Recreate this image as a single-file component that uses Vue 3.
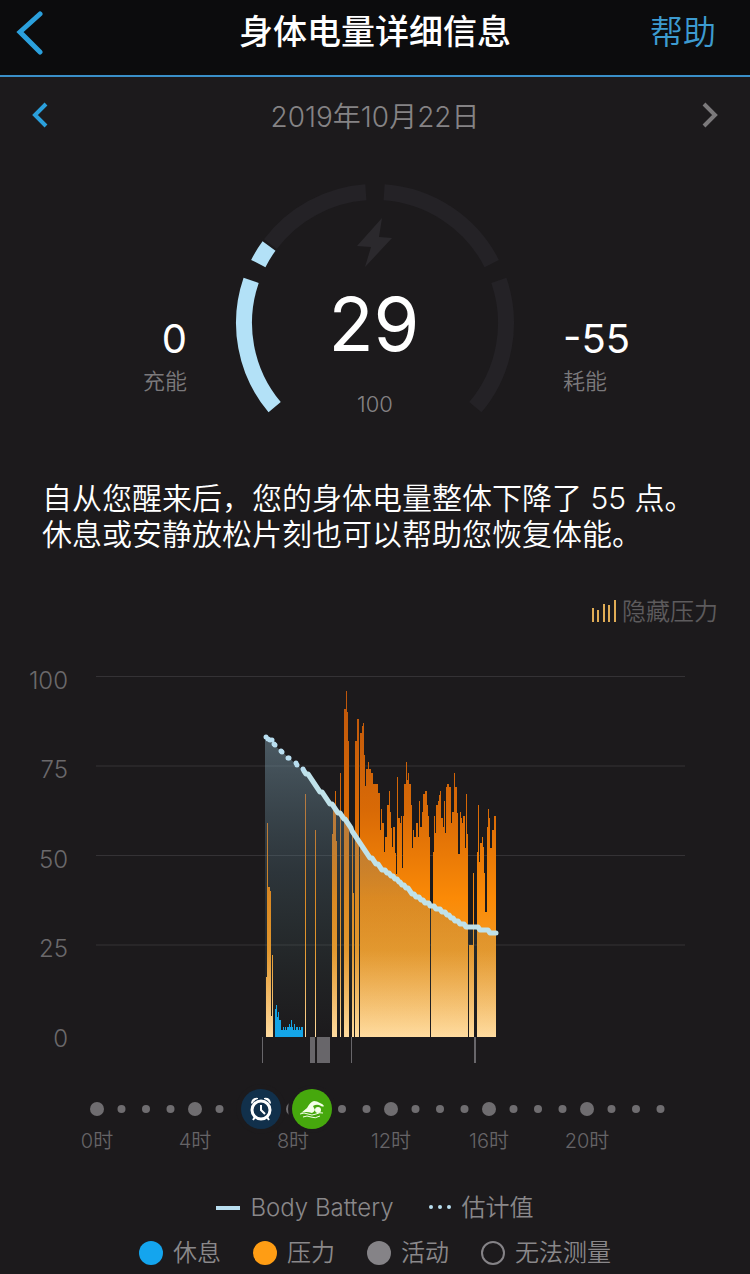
<template>
  <main class="page">
    <header class="topbar">
      <button type="button" class="icon-btn" aria-label="返回">
        <svg width="28" height="46" viewBox="0 0 28 46">
          <path d="M24 5 L4 23 L24 43" class="chev back" />
        </svg>
      </button>
      <h1>身体电量详细信息</h1>
      <a href="#" class="help">帮助</a>
    </header>

    <nav class="datebar">
      <button type="button" class="icon-btn" aria-label="前一天">
        <svg width="16" height="28" viewBox="0 0 16 28">
          <path d="M14 3 L3 14 L14 25" class="chev" />
        </svg>
      </button>
      <time datetime="2019-10-22">2019年10月22日</time>
      <button type="button" class="icon-btn" aria-label="后一天">
        <svg width="16" height="28" viewBox="0 0 16 28">
          <path d="M2 3 L13 14 L2 25" class="chev next" />
        </svg>
      </button>
    </nav>

    <section class="summary">
      <div class="stat left">
        <strong>0</strong>
        <span>充能</span>
      </div>
      <svg class="gauge" viewBox="0 0 280 250">
        <path v-for="seg in gauge" :key="seg.from" :d="arc(seg.from, seg.to)" :class="['seg', { on: seg.on }]" />
        <path d="M147 43 L122 71 L136 72 L130 92 L157 63 L144 62 Z" class="bolt" />
        <text x="139" y="176" class="score">29</text>
        <text x="140" y="237" class="max">100</text>
      </svg>
      <div class="stat right">
        <strong>-55</strong>
        <span>耗能</span>
      </div>
    </section>

    <p class="message">自从您醒来后，您的身体电量整体下降了 55 点。<br />休息或安静放松片刻也可以帮助您恢复体能。</p>

    <div class="tools">
      <button type="button" class="toggle">
        <svg width="24" height="24" viewBox="0 0 24 24">
          <path d="M0 8h2v14h-2z M5 10h2v12h-2z M11 4h2v18h-2z M16 5h2v17h-2z M22 0h2v22h-2z" fill="#e0ac55" />
        </svg>
        <span>隐藏压力</span>
      </button>
    </div>

    <svg class="chart" viewBox="0 0 750 500">
      <defs>
        <linearGradient id="stress" gradientUnits="userSpaceOnUse" x1="0" y1="30" x2="0" y2="377">
          <stop offset="0" stop-color="#bd560c" />
          <stop offset="0.35" stop-color="#d96a06" />
          <stop offset="0.6" stop-color="#fb8a06" />
          <stop offset="0.75" stop-color="#f59a22" />
          <stop offset="1" stop-color="#ffdca0" />
        </linearGradient>
        <linearGradient id="battery" gradientUnits="userSpaceOnUse" x1="0" y1="78" x2="0" y2="377">
          <stop offset="0" stop-color="#86a9bb" stop-opacity="0.45" />
          <stop offset="0.45" stop-color="#5f8594" stop-opacity="0.25" />
          <stop offset="0.8" stop-color="#5c8b8a" stop-opacity="0.08" />
          <stop offset="1" stop-color="#5c8b8a" stop-opacity="0" />
        </linearGradient>
      </defs>

      <g v-for="v in levels" :key="v">
        <line v-if="v" x1="96" x2="685" :y1="yOf(v)" :y2="yOf(v)" class="grid" />
        <text x="68" :y="yOf(v) + 12" class="level">{{ v }}</text>
      </g>

      <path :d="steps(stress)" fill="url(#stress)" />
      <path :d="steps(rest)" fill="#14a5e8" />
      <path :d="areaPath" fill="url(#battery)" />
      <rect v-for="a in activity" :key="a[0]" :x="a[0]" y="377" :width="a[1]" height="26" class="activity" />
      <path :d="curvePath" class="curve" />
      <circle v-for="d in estimated" :key="d[0]" :cx="d[0]" :cy="d[1]" r="2.5" class="estimate" />

      <g v-for="h in hours" :key="'h' + h">
        <circle :cx="xOf(h)" cy="449" :r="h % 4 ? 4 : 7" class="dot" />
        <text v-if="h % 4 === 0" :x="xOf(h)" y="488" class="hour">{{ h }}时</text>
      </g>

      <g transform="translate(261 449)">
        <circle r="25" class="ring" />
        <circle r="20" fill="#11304b" />
        <circle cy="1" r="9" class="clock" />
        <path d="M0 -4 V1 L4 5" class="hands" />
        <path d="M-10 -6 Q-9 -12 -3 -11 L-3 -10 Q-7 -9 -9 -5 Z M10 -6 Q9 -12 3 -11 L3 -10 Q7 -9 9 -5 Z" class="bell" />
        <path d="M-6 8 L-8 11 M6 8 L8 11" class="hands" />
      </g>
      <g transform="translate(312 449)">
        <circle r="24" class="ring" />
        <circle r="20" fill="#46a80d" />
        <path
          d="M-11 4 L-5 -1 Q-2 -7 2 -8 Q5 -8 8 -6 Q11 -5 12 -3 Q11 -2 9 -3 Q6 -5 3 -4 L1 -3 Q2 -1 3 1 Q2 3 0 4 Q-6 2 -11 4 Z"
          fill="#f4ffe9"
        />
        <circle cx="6" cy="1" r="3" fill="#f4ffe9" />
        <path d="M-12 5 Q-8 3 -4 5 T4 5 T11 4 M-9 8 Q-5 6 -1 8 T8 7" class="wave" />
      </g>
    </svg>

    <footer class="legend">
      <ul class="lines">
        <li>
          <i class="dash"></i>
          Body Battery
        </li>
        <li>
          <svg width="24" height="8" viewBox="0 0 24 8">
            <circle cx="3" cy="3" r="2" />
            <circle cx="12" cy="3" r="2" />
            <circle cx="21" cy="3" r="2" />
          </svg>
          估计值
        </li>
      </ul>
      <ul class="kinds">
        <li v-for="k in kinds" :key="k.name">
          <i :class="['mark', k.type]"></i>
          {{ k.name }}
        </li>
      </ul>
    </footer>
  </main>
</template>

<script setup>
import { computed } from 'vue'

const BASE = 377
const levels = [100, 75, 50, 25, 0]
const hours = Array.from({ length: 24 }, (_, i) => i)

const kinds = [
  { name: '休息', type: 'rest' },
  { name: '压力', type: 'stress' },
  { name: '活动', type: 'active' },
  { name: '无法测量', type: 'none' },
]

// degrees, 0 = right, counter-clockwise
const gauge = [
  { from: 220, to: 161, on: true },
  { from: 153, to: 144, on: true },
  { from: 143, to: 94, on: false },
  { from: 86, to: 27, on: false },
  { from: 19, to: -40, on: false },
]

// [x, top]: every run lasts until the next one starts
const stress = [
  [266, 317], [267, 163], [268, 227], [270, 231], [271, 356], [272, 295], [273, 377],
  [305, 134], [306, 377], [315, 170], [316, 377],
  [332, 174], [333, 144], [335, 131], [336, 181], [337, 377], [340, 113], [341, 377],
  [344, 49], [346, 31], [347, 52], [348, 81], [349, 377], [352, 173], [353, 233], [354, 377],
  [355, 81], [357, 59], [359, 377], [360, 73], [362, 66], [363, 63], [364, 95], [365, 126],
  [366, 109], [368, 102], [369, 109], [371, 113], [373, 124], [375, 124], [378, 133],
  [380, 170], [381, 149], [382, 163], [384, 192], [385, 177], [387, 145], [389, 131],
  [390, 152], [391, 168], [392, 187], [393, 167], [395, 193], [396, 214], [397, 117],
  [398, 158], [400, 163], [401, 156], [402, 208], [403, 156], [404, 124], [406, 102],
  [407, 120], [408, 113], [409, 124], [411, 145], [412, 188], [413, 170], [414, 177],
  [416, 163], [418, 177], [419, 141], [420, 167], [422, 152], [423, 134], [425, 131],
  [427, 145], [428, 156], [429, 177], [430, 377], [431, 245], [433, 192], [434, 156],
  [435, 173], [436, 145], [438, 141], [439, 135], [440, 131], [441, 158], [443, 167],
  [444, 141], [445, 173], [446, 127], [447, 124], [449, 127], [451, 163], [452, 152],
  [454, 113], [455, 127], [457, 153], [458, 194], [460, 152], [461, 158], [462, 163],
  [463, 156], [465, 188], [466, 134], [467, 174], [468, 377], [469, 285], [472, 285],
  [473, 213], [474, 377], [477, 192], [478, 145], [479, 202], [480, 183], [482, 177],
  [483, 187], [484, 213], [485, 252], [487, 167], [488, 149], [489, 158], [490, 188],
  [492, 170], [494, 156], [496, 377],
]

const rest = [
  [275, 349], [276, 345], [277, 357], [278, 352], [279, 360], [281, 370], [283, 367],
  [284, 370], [285, 367], [286, 370], [287, 367], [289, 364], [290, 367], [291, 360],
  [292, 367], [293, 370], [294, 364], [295, 370], [296, 367], [298, 370], [299, 367],
  [300, 370], [301, 367], [303, 377],
]

const battery = [
  [304, 110], [310, 118], [320, 131], [332, 145], [345, 160], [352, 170], [360, 183],
  [370, 197], [383, 210], [400, 222], [417, 237], [430, 245], [445, 253], [458, 262],
  [467, 267], [478, 267], [482, 270], [496, 273],
]

const estimated = [
  [266, 77], [268, 79], [270, 80], [272, 80], [274, 84], [275, 85], [281, 91],
  [282, 92], [288, 98], [289, 98], [296, 103], [297, 105], [303, 109],
]

// [x, width]
const activity = [[262, 1], [310, 5], [317, 13], [351, 1], [474, 2]]

const yOf = (v) => 16.5 + (100 - v) * 3.58
const xOf = (h) => 97 + h * 24.5

function arc(from, to) {
  const r = 131
  const at = (deg) => {
    const a = (deg * Math.PI) / 180
    return `${(140 + r * Math.cos(a)).toFixed(2)} ${(148 - r * Math.sin(a)).toFixed(2)}`
  }
  return `M${at(from)} A${r} ${r} 0 0 1 ${at(to)}`
}

function steps(runs) {
  const body = runs.map(([x, y]) => `H${x} V${y}`).join(' ')
  return `M${runs[0][0]} ${BASE} ${body} Z`
}

const curve = computed(() => {
  const out = []
  for (let i = 1; i < battery.length; i++) {
    const [x0, y0] = battery[i - 1]
    const [x1, y1] = battery[i]
    for (let x = x0; x < x1; x += 2) {
      const y = y0 + ((y1 - y0) * (x - x0)) / (x1 - x0)
      out.push([x, Math.round(y / 3) * 3])
    }
  }
  out.push(battery[battery.length - 1])
  return out
})

const curvePath = computed(() => 'M' + curve.value.map((p) => p.join(' ')).join(' L'))
const areaPath = computed(
  () => `M265 ${BASE} V77 ` + curve.value.map((p) => `L${p.join(' ')}`).join(' ') + ` V${BASE} Z`
)
</script>

<style>
body {
  margin: 0;
  background: #1c1a1c;
}
</style>

<style scoped>
.page {
  background: #1c1a1c;
  color: #fff;
  font-family: Inter, 'Noto Sans CJK SC', sans-serif;
  font-weight: 350;
  padding-bottom: 2px;
}

.topbar {
  display: grid;
  grid-template-columns: 100px 1fr 100px;
  align-items: center;
  padding: 9px 34px 20px 16px;
  background: #0c0c0d;
  border-bottom: 2px solid #3a8fc8;
}

h1 {
  margin: 0;
  padding-left: 18px;
  font-size: 34px;
  line-height: 40px;
  font-weight: 500;
  text-align: center;
}

.help {
  color: #3d9bd0;
  font-size: 33px;
  line-height: 40px;
  text-align: right;
  text-decoration: none;
}

.icon-btn {
  display: flex;
  padding: 0;
  border: none;
  background: none;
  cursor: pointer;
}

.chev {
  fill: none;
  stroke: #2ba0dc;
  stroke-width: 4;
}

.back {
  stroke-width: 5;
  stroke-linecap: round;
}

.next {
  stroke: #7b797b;
}

.datebar {
  display: flex;
  align-items: center;
  justify-content: space-between;
  height: 76px;
  padding: 0 32px;
}

.datebar time {
  color: #858385;
  font-size: 28px;
}

.summary {
  display: grid;
  grid-template-columns: 1fr 280px 1fr;
  padding-top: 22px;
}

.gauge {
  display: block;
  width: 100%;
}

.seg {
  fill: none;
  stroke: #242226;
  stroke-width: 16;
}

.seg.on {
  stroke: #b3e1f7;
}

.bolt {
  fill: #2b292d;
}

.score,
.max,
.hour {
  text-anchor: middle;
}

.score {
  fill: #fff;
  font-size: 74px;
  font-weight: 400;
}

.max {
  fill: #858385;
  font-size: 22px;
}

.stat {
  display: flex;
  flex-direction: column;
  padding-top: 140px;
}

.stat.left {
  align-items: flex-end;
  padding-right: 48px;
}

.stat.right {
  padding-left: 48px;
}

.stat strong {
  font-size: 40px;
  line-height: 48px;
  font-weight: 400;
}

.stat span {
  color: #7b797b;
  font-size: 22px;
  line-height: 36px;
}

.message {
  margin: 0;
  padding: 55px 30px 0 42px;
  font-size: 30px;
  line-height: 36px;
}

.tools {
  display: flex;
  justify-content: flex-end;
  padding: 42px 32px 0 0;
}

.toggle {
  display: flex;
  align-items: center;
  gap: 6px;
  padding: 0;
  border: none;
  background: none;
  color: #5d5b5d;
  font: inherit;
  font-size: 24px;
  line-height: 36px;
  cursor: pointer;
}

.chart {
  display: block;
  width: 100%;
  margin-top: 30px;
}

.grid {
  stroke: #343235;
}

.level {
  fill: #6b696b;
  font-size: 24px;
  text-anchor: end;
}

.activity {
  fill: #68666a;
}

.curve {
  fill: none;
  stroke: #c0e2ea;
  stroke-width: 5;
  stroke-linejoin: round;
  stroke-linecap: round;
}

.estimate {
  fill: #b9def0;
}

.dot {
  fill: #6f6d70;
}

.hour {
  fill: #666467;
  font-size: 20px;
}

.ring {
  fill: #1c1a1c;
}

.clock,
.hands,
.wave {
  fill: none;
  stroke: #fff;
  stroke-width: 2;
}

.clock {
  stroke-width: 3;
}

.bell {
  fill: #fff;
}

.wave {
  stroke: #f4ffe9;
  stroke-width: 1;
}

.legend {
  color: #8a888a;
  font-size: 24px;
  line-height: 36px;
}

.legend ul {
  display: flex;
  justify-content: center;
  margin: 0;
  padding: 0;
  list-style: none;
}

.legend li {
  display: flex;
  align-items: center;
  gap: 10px;
}

.legend .lines {
  gap: 34px;
  padding-top: 30px;
}

.legend .kinds {
  gap: 32px;
  padding-top: 9px;
}

.dash {
  width: 24px;
  height: 4px;
  background: #b9def0;
}

.lines circle {
  fill: #b9def0;
}

.mark {
  width: 24px;
  height: 24px;
  border-radius: 50%;
  box-sizing: border-box;
}

.mark.rest {
  background: #14a5ee;
}

.mark.stress {
  background: #ff9d14;
}

.mark.active {
  background: #858387;
}

.mark.none {
  border: 2px solid #858387;
}
</style>
